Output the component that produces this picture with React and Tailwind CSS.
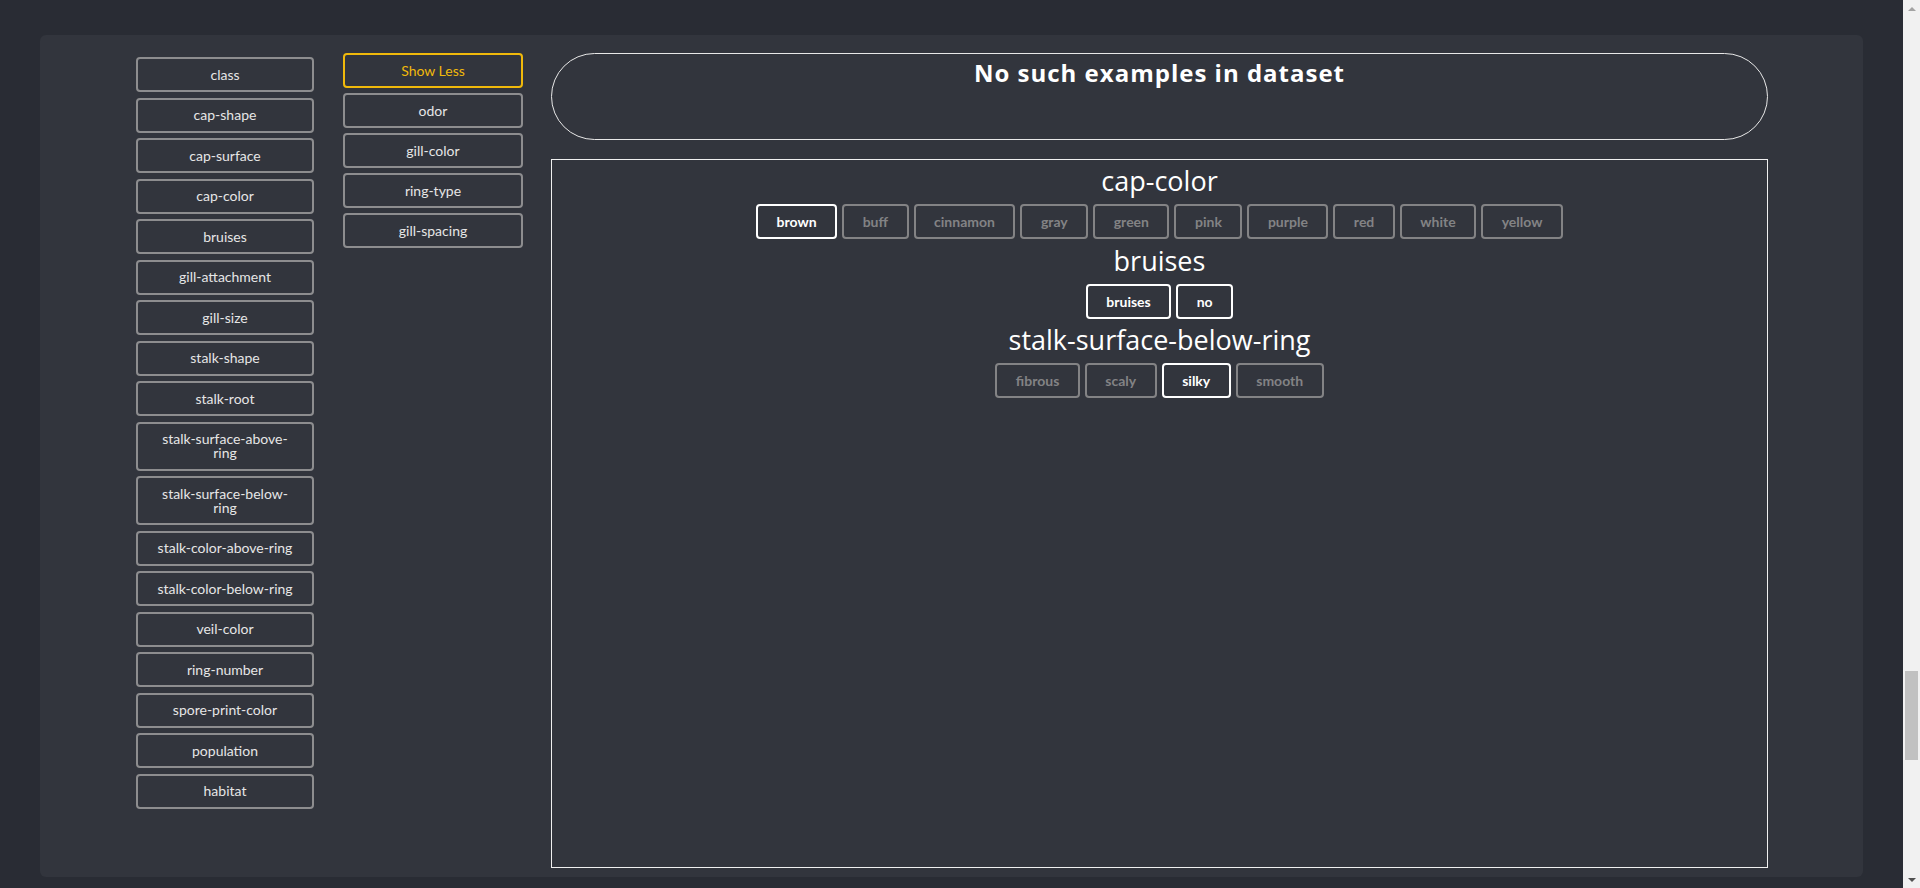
import React from 'react';

const features = [
    'class', 'cap-shape', 'cap-surface', 'cap-color', 'bruises', 'gill-attachment', 'gill-size',
    'stalk-shape', 'stalk-root', 'stalk-surface-above-ring', 'stalk-surface-below-ring',
    'stalk-color-above-ring', 'stalk-color-below-ring', 'veil-color', 'ring-number',
    'spore-print-color', 'population', 'habitat',
];

const moreFeatures = ['odor', 'gill-color', 'ring-type', 'gill-spacing'];

const filters = [
    {
        name: 'cap-color',
        options: ['brown', 'buff', 'cinnamon', 'gray', 'green', 'pink', 'purple', 'red', 'white', 'yellow'],
        selected: ['brown'],
    },
    { name: 'bruises', options: ['bruises', 'no'], selected: ['bruises', 'no'] },
    {
        name: 'stalk-surface-below-ring',
        options: ['fibrous', 'scaly', 'silky', 'smooth'],
        selected: ['silky'],
    },
];

const FeatureButton = ({ label }) => (
    <button className="w-full border-2 border-[#8d8d8f] rounded-[4px] px-[16px] py-[8.5px] text-[14px] leading-[14px] text-[#e6e6e6] font-['Lato',sans-serif] text-center">
        {label}
    </button>
);

const App = () => {
    return (
        <div className="h-screen flex overflow-hidden bg-[#292c34]">
            <div className="flex-1 pt-[35px]">
                <div className="mx-10 rounded-md bg-[#32353d] pl-[96px] pr-[95px] pt-[18px] pb-[9px] flex items-start">

                    {/* Feature list */}
                    <div className="w-[178px] shrink-0 mt-[4px] flex flex-col gap-[5.5px]">
                        {features.map((f) => (
                            <FeatureButton key={f} label={f} />
                        ))}
                    </div>

                    {/* Extra features */}
                    <div className="w-[180px] shrink-0 ml-[29px] flex flex-col gap-[5px]">
                        <button className="w-full border-2 border-[#f0b90b] rounded-[4px] py-[8.5px] text-[14px] leading-[14px] text-[#f0b90b] font-['Lato',sans-serif]">
                            Show Less
                        </button>
                        {moreFeatures.map((f) => (
                            <FeatureButton key={f} label={f} />
                        ))}
                    </div>

                    {/* Results */}
                    <div className="flex-1 ml-[28px] flex flex-col gap-[19px]">
                        <div className="h-[87px] rounded-full border border-[#e8e8e8] pt-[4px] text-center">
                            <h2 className="text-[24px] leading-[30px] tracking-[1px] font-bold text-white font-['Open_Sans',sans-serif]">
                                No such examples in dataset
                            </h2>
                        </div>

                        <div className="h-[709px] border border-[#f0f0f0] pt-[6px] flex flex-col items-center">
                            {filters.map((f) => (
                                <div key={f.name} className="flex flex-col items-center mb-[6.5px]">
                                    <h3 className="text-[27px] leading-[30px] text-white font-['Open_Sans',sans-serif] mb-[8px]">
                                        {f.name}
                                    </h3>
                                    <div className="flex gap-[5px]">
                                        {f.options.map((o) => {
                                            const on = f.selected.includes(o);
                                            return (
                                                <button
                                                    key={o}
                                                    className={
                                                        on
                                                            ? 'h-[35px] px-[18.5px] border-2 border-white rounded-[4px] text-[14px] font-bold text-white font-[\'Lato\',sans-serif]'
                                                            : 'h-[35px] px-[18.5px] border-2 border-[#838385] rounded-[4px] text-[14px] font-bold text-[#838385] font-[\'Lato\',sans-serif]'
                                                    }
                                                >
                                                    {o}
                                                </button>
                                            );
                                        })}
                                    </div>
                                </div>
                            ))}
                        </div>
                    </div>

                </div>
            </div>

            {/* Browser scrollbar */}
            <div className="w-[17px] shrink-0 bg-[#f1f1f1] flex flex-col items-center">
                <div className="h-[17px] flex items-center justify-center">
                    <div className="w-0 h-0 border-l-[4px] border-r-[4px] border-b-[4px] border-l-transparent border-r-transparent border-b-[#a3a3a3]"></div>
                </div>
                <div className="mt-[654px] w-[13px] h-[89px] bg-[#c1c1c1]"></div>
                <div className="flex-1"></div>
                <div className="h-[17px] flex items-center justify-center">
                    <div className="w-0 h-0 border-l-[4px] border-r-[4px] border-t-[4px] border-l-transparent border-r-transparent border-t-[#505050]"></div>
                </div>
            </div>
        </div>
    );
};

export default App;
